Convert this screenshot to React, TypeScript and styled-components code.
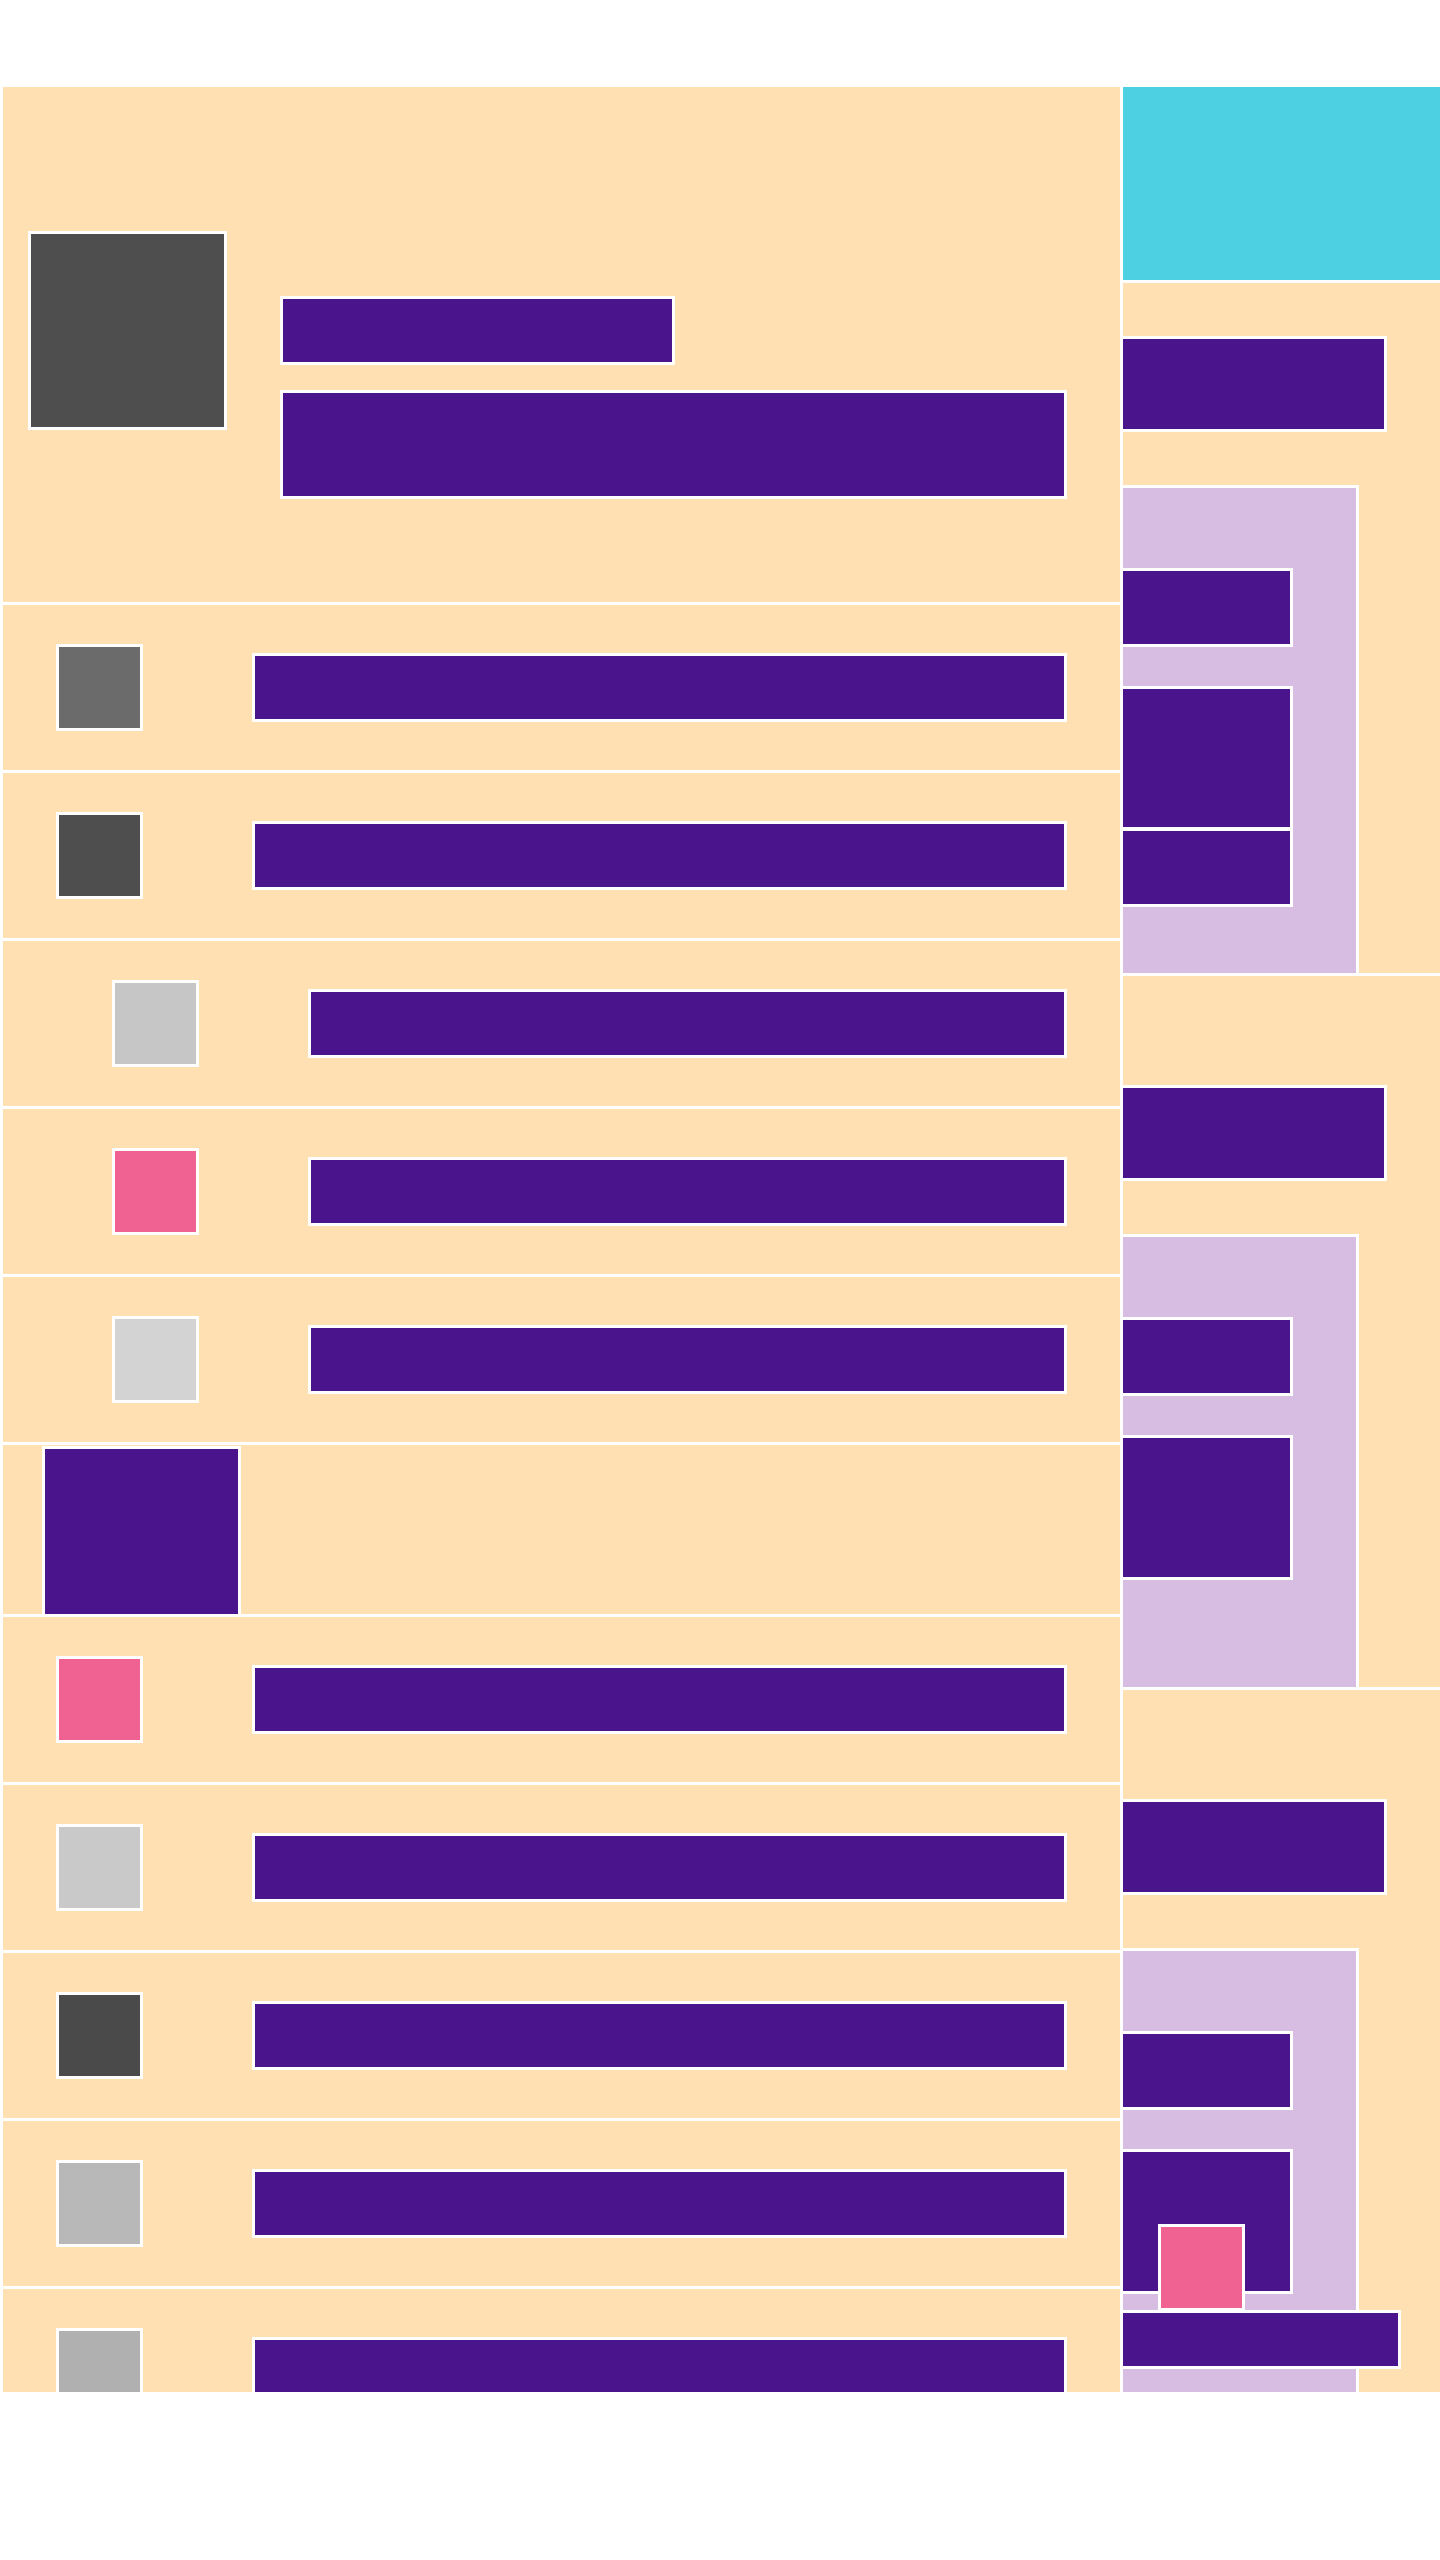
import styled, { createGlobalStyle } from "styled-components";

const GlobalStyle = createGlobalStyle`
  html, body {
    margin: 0;
    padding: 0;
    background: #fff;
  }
  body {
    font-family: "Liberation Sans", Arial, sans-serif;
  }
`;

const PEACH = "#ffe0b2";
const PURPLE = "#4a148c";
const LAVENDER = "#d7bde2";
const CYAN = "#4dd0e1";
const PINK = "#f06292";

// every drawn block gets a thin white frame round it
const frame = `box-shadow: 0 0 0 3px #fff;`;

const Stage = styled.main`
  display: grid;
  grid-template-columns: 1117px 317px;
  column-gap: 3px;
  align-items: start;
  margin: 87px 0 0 3px;
  height: 2305px;
  overflow: hidden;
  background: #fff;
`;

/* ---------- left feed ---------- */

const Feed = styled.section`
  display: flex;
  flex-direction: column;
  gap: 3px;
  min-width: 0;
`;

const Header = styled.header`
  display: flex;
  align-items: flex-start;
  gap: 59px;
  flex-shrink: 0;
  height: 515px;
  box-sizing: border-box;
  padding: 147px 56px 0 28px;
  background: ${PEACH};
`;

const Avatar = styled.div`
  flex-shrink: 0;
  width: 193px;
  height: 193px;
  background: #4e4e4e;
  ${frame}
`;

const TitleBlock = styled.div`
  display: flex;
  flex-direction: column;
  align-items: flex-start;
  gap: 31px;
  margin-top: 65px;
  flex: 1;
`;

const Title = styled.div`
  width: 389px;
  height: 63px;
  background: ${PURPLE};
  ${frame}
`;

const Subtitle = styled.div`
  align-self: stretch;
  height: 103px;
  background: ${PURPLE};
  ${frame}
`;

const Row = styled.div<{ $indent?: boolean }>`
  display: flex;
  align-items: center;
  gap: 115px;
  flex-shrink: 0;
  height: 165px;
  box-sizing: border-box;
  padding: 0 56px 0 ${(p) => (p.$indent ? 112 : 56)}px;
  background: ${PEACH};
`;

const Thumb = styled.div<{ $color: string }>`
  flex-shrink: 0;
  width: 81px;
  height: 81px;
  background: ${(p) => p.$color};
  ${frame}
`;

const Line = styled.div`
  flex: 1;
  height: 63px;
  background: ${PURPLE};
  ${frame}
`;

const FeatureRow = styled.div`
  display: flex;
  align-items: flex-start;
  flex-shrink: 0;
  height: 169px;
  box-sizing: border-box;
  padding: 4px 0 0 42px;
  background: ${PEACH};
`;

const Feature = styled.div`
  width: 193px;
  height: 165px;
  background: ${PURPLE};
  ${frame}
`;

/* ---------- right column ---------- */

const Aside = styled.aside`
  display: flex;
  flex-direction: column;
  gap: 3px;
  min-width: 0;
`;

const Banner = styled.div`
  flex-shrink: 0;
  height: 193px;
  background: ${CYAN};
`;

const Card = styled.div<{ $top: number }>`
  display: flex;
  flex-direction: column;
  align-items: flex-start;
  flex-shrink: 0;
  padding-top: ${(p) => p.$top}px;
  background: ${PEACH};
`;

const CardTitle = styled.div`
  width: 261px;
  height: 90px;
  background: ${PURPLE};
  ${frame}
`;

const Panel = styled.div<{ $bottom: number }>`
  display: flex;
  flex-direction: column;
  align-items: flex-start;
  width: 233px;
  margin-top: 59px;
  padding: 83px 0 ${(p) => p.$bottom}px;
  background: ${LAVENDER};
  ${frame}
`;

const Item = styled.div<{ $h: number; $gap: number }>`
  flex-shrink: 0;
  width: 167px;
  height: ${(p) => p.$h}px;
  margin-top: ${(p) => p.$gap}px;
  background: ${PURPLE};
  ${frame}
`;

const Badge = styled.div`
  flex-shrink: 0;
  width: 81px;
  height: 81px;
  margin: -64px 0 0 38px;
  background: ${PINK};
  ${frame}
`;

const Caption = styled.div`
  flex-shrink: 0;
  width: 275px;
  height: 53px;
  margin-top: 5px;
  background: ${PURPLE};
  ${frame}
`;

type RowData = { color: string; indent?: boolean };

const topRows: RowData[] = [
  { color: "#6b6b6b" },
  { color: "#4e4e4e" },
  { color: "#c6c6c6", indent: true },
  { color: PINK, indent: true },
  { color: "#d3d3d3", indent: true },
];

const bottomRows: RowData[] = [
  { color: PINK },
  { color: "#c9c9c9" },
  { color: "#4a4a4a" },
  { color: "#b8b8b8" },
  { color: "#b0b0b0" },
];

function FeedRow({ color, indent }: RowData) {
  return (
    <Row $indent={indent}>
      <Thumb $color={color} />
      <Line />
    </Row>
  );
}

export default function App() {
  return (
    <>
      <GlobalStyle />
      <Stage>
        <Feed>
          <Header>
            <Avatar />
            <TitleBlock>
              <Title />
              <Subtitle />
            </TitleBlock>
          </Header>
          {topRows.map((r, i) => (
            <FeedRow key={"t" + i} {...r} />
          ))}
          <FeatureRow>
            <Feature />
          </FeatureRow>
          {bottomRows.map((r, i) => (
            <FeedRow key={"b" + i} {...r} />
          ))}
        </Feed>

        <Aside>
          <Banner />
          <Card $top={56}>
            <CardTitle />
            <Panel $bottom={69}>
              <Item $h={73} $gap={0} />
              <Item $h={138} $gap={45} />
              <Item $h={73} $gap={4} />
            </Panel>
          </Card>
          <Card $top={112}>
            <CardTitle />
            <Panel $bottom={110}>
              <Item $h={73} $gap={0} />
              <Item $h={139} $gap={45} />
            </Panel>
          </Card>
          <Card $top={112}>
            <CardTitle />
            <Panel $bottom={110}>
              <Item $h={73} $gap={0} />
              <Item $h={139} $gap={45} />
              <Badge />
              <Caption />
            </Panel>
          </Card>
        </Aside>
      </Stage>
    </>
  );
}
